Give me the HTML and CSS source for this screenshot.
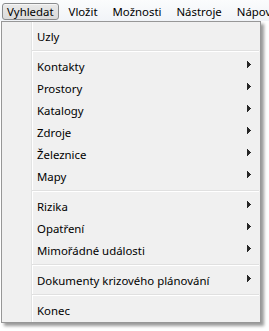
FILE: index.html
```html
<!DOCTYPE html>
<html lang="cs">
<head>
<meta charset="utf-8">
<title>Menu</title>
<link rel="stylesheet" href="styles.css">
</head>
<body>
<div class="menubar">
  <span class="mb-item active">Vyhledat</span>
  <span class="mb-item">Vložit</span>
  <span class="mb-item">Možnosti</span>
  <span class="mb-item">Nástroje</span>
  <span class="mb-item">Nápověda</span>
</div>
<div class="dropdown">
  <div class="item">Uzly</div>
  <div class="sep"></div>
  <div class="item">Kontakty<svg class="arrow" width="4" height="7" viewBox="0 0 4 7"><path d="M0 0h1v1h1v1h1v1h1v1h-1v1h-1v1h-1v1h-1z"/></svg></div>
  <div class="item">Prostory<svg class="arrow" width="4" height="7" viewBox="0 0 4 7"><path d="M0 0h1v1h1v1h1v1h1v1h-1v1h-1v1h-1v1h-1z"/></svg></div>
  <div class="item">Katalogy<svg class="arrow" width="4" height="7" viewBox="0 0 4 7"><path d="M0 0h1v1h1v1h1v1h1v1h-1v1h-1v1h-1v1h-1z"/></svg></div>
  <div class="item">Zdroje<svg class="arrow" width="4" height="7" viewBox="0 0 4 7"><path d="M0 0h1v1h1v1h1v1h1v1h-1v1h-1v1h-1v1h-1z"/></svg></div>
  <div class="item">Železnice<svg class="arrow" width="4" height="7" viewBox="0 0 4 7"><path d="M0 0h1v1h1v1h1v1h1v1h-1v1h-1v1h-1v1h-1z"/></svg></div>
  <div class="item">Mapy<svg class="arrow" width="4" height="7" viewBox="0 0 4 7"><path d="M0 0h1v1h1v1h1v1h1v1h-1v1h-1v1h-1v1h-1z"/></svg></div>
  <div class="sep"></div>
  <div class="item">Rizika<svg class="arrow" width="4" height="7" viewBox="0 0 4 7"><path d="M0 0h1v1h1v1h1v1h1v1h-1v1h-1v1h-1v1h-1z"/></svg></div>
  <div class="item">Opatření<svg class="arrow" width="4" height="7" viewBox="0 0 4 7"><path d="M0 0h1v1h1v1h1v1h1v1h-1v1h-1v1h-1v1h-1z"/></svg></div>
  <div class="item">Mimořádné události<svg class="arrow" width="4" height="7" viewBox="0 0 4 7"><path d="M0 0h1v1h1v1h1v1h1v1h-1v1h-1v1h-1v1h-1z"/></svg></div>
  <div class="sep"></div>
  <div class="item">Dokumenty krizového plánování<svg class="arrow" width="4" height="7" viewBox="0 0 4 7"><path d="M0 0h1v1h1v1h1v1h1v1h-1v1h-1v1h-1v1h-1z"/></svg></div>
  <div class="sep"></div>
  <div class="item">Konec</div>
</div>
</body>
</html>
```
FILE: styles.css
```css
html, body {
  margin: 0;
  padding: 0;
  background: #ffffff;
}
body {
  width: 269px;
  height: 331px;
  overflow: hidden;
  font-family: "Noto Sans", "Open Sans", "DejaVu Sans", sans-serif;
  font-size: 11.4px;
  color: #000;
}
.menubar {
  height: 21px;
  display: flex;
  align-items: flex-start;
  white-space: nowrap;
  overflow: hidden;
  background: linear-gradient(#fbfcfd, #f1f4f8);
  box-sizing: border-box;
}
.mb-item {
  margin-top: 3px;
  height: 15px;
  line-height: 15px;
  padding: 0 4px;
  border: 1px solid transparent;
  border-radius: 3px;
  margin-right: 5px;
  flex: none;
}
.mb-item:first-child {
  margin-left: 2px;
}
.mb-item.active {
  border-color: #8a8c8e;
  background: linear-gradient(#e9e9e9, #dadada);
  box-shadow: inset 0 1px 0 rgba(255,255,255,0.6);
}
.dropdown {
  margin-left: 1px;
  width: 258px;
  border: 1px solid #979797;
  padding: 3px 0 1px;
  background: linear-gradient(to right, #f0f0f0 29px, #e2e3e3 29px, #e2e3e3 30px, #ffffff 30px, #ffffff 31px, #f0f0f0 31px);
  box-shadow: 3px 3px 3px rgba(0,0,0,0.4);
}
.item {
  height: 22px;
  display: flex;
  align-items: center;
  padding-left: 35px;
  white-space: nowrap;
}
.arrow {
  margin-left: auto;
  margin-right: 9px;
  margin-bottom: 3px;
  fill: #262626;
  shape-rendering: crispEdges;
  flex: none;
}
.sep {
  height: 8px;
  margin-left: 30px;
  margin-right: 1px;
  background: linear-gradient(to bottom, transparent 3px, #e0e0e0 3px, #e0e0e0 4px, #ffffff 4px, #ffffff 5px, transparent 5px);
}
```
